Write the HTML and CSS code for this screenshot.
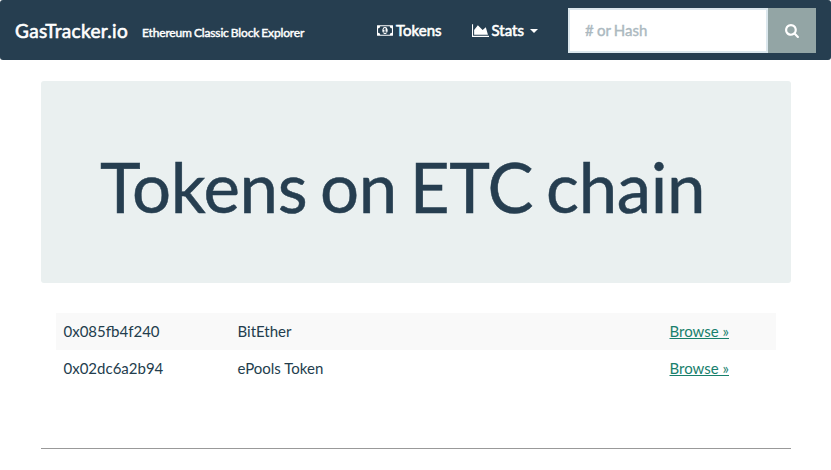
FILE: index.html
```html
<!DOCTYPE html>
<html lang="en">
<head>
<meta charset="utf-8">
<title>Tokens on ETC chain</title>
<link rel="stylesheet" href="styles.css">
</head>
<body>
<nav class="navbar">
  <a class="brand">GasTracker.io</a>
  <span class="tagline">Ethereum Classic Block Explorer</span>
  <div class="links">
    <a class="link"><svg class="icon-money" viewBox="0 0 1920 1792"><path fill="currentColor" d="M768 1152h384v-96h-128V608H910L762 745l77 80q42-37 55-57h2v288H768zm512-256q0 70-21 142t-59.500 134-101.500 101-138 39-138-39-101.500-101T661 1038t-21-142 21-142 59.500-134T822 519t138-39 138 39 101.500 101 59.500 134 21 142zm512 256V640q-106 0-181-75t-75-181H384q0 106-75 181t-181 75v512q106 0 181 75t75 181h1152q0-106 75-181t181-75zm128-832v1152q0 26-19 45t-45 19H64q-26 0-45-19t-19-45V320q0-26 19-45t45-19h1792q26 0 45 19t19 45z"/></svg><span>Tokens</span></a>
    <a class="link stats"><svg class="icon-chart" viewBox="0 0 2048 1792"><path fill="currentColor" d="M2048 1536v128H0V128h128v1408zM1664 512l256 896H256V832l448-576 576 576z"/></svg><span>Stats</span><i class="caret"></i></a>
  </div>
  <form class="search">
    <input class="field" type="text" placeholder="# or Hash">
    <button class="go" type="button" aria-label="Search"><svg class="icon-search" viewBox="0 0 1664 1792"><path fill="currentColor" d="M1152 832q0-185-131.500-316.500T704 384 387.500 515.500 256 832t131.500 316.500T704 1280t316.500-131.500T1152 832zm512 832q0 52-38 90t-90 38q-54 0-90-38l-343-342q-179 124-399 124-143 0-273.500-55.500t-225-150-150-225T0 832t55.500-273.500 150-225 225-150T704 128t273.500 55.500 225 150 150 225T1408 832q0 220-124 399l343 343q37 37 37 90z"/></svg></button>
  </form>
</nav>
<main class="container">
  <header class="hero"><h1>Tokens on ETC chain</h1></header>
  <table class="tokens">
    <tr><td class="addr">0x085fb4f240</td><td class="name">BitEther</td><td><a href="#">Browse »</a></td></tr>
    <tr><td class="addr">0x02dc6a2b94</td><td class="name">ePools Token</td><td><a href="#">Browse »</a></td></tr>
  </table>
  <hr class="rule">
</main>
</body>
</html>
```
FILE: styles.css
```css
* { box-sizing: border-box; }
body { margin: 0; background: #fff; color: #233d4d; font: 15px/21px Lato, sans-serif; height: 470px; overflow: hidden; }
.navbar { height: 60px; background: #263e50; border-radius: 3px; color: #fff; display: flex; align-items: center; padding: 0 15px; }
.brand { font-size: 19px; -webkit-text-stroke: .6px #fff; letter-spacing: .32px; width: 127px; white-space: nowrap; }
.tagline { font-size: 12px; -webkit-text-stroke: .45px #fff; letter-spacing: -.15px; word-spacing: -.8px; width: 235px; white-space: nowrap; padding-top: 5px; flex: none; }
.links { display: flex; gap: 30px; width: 191px; }
.link { display: flex; align-items: center; -webkit-text-stroke: .6px #fff; gap: 3px; }
.icon-money { width: 16px; height: 15px; }
.icon-chart { width: 17px; height: 15px; }
.icon-search { width: 14px; height: 15px; }
.caret { border: 4px solid transparent; border-top-color: #fff; border-bottom: 0; margin: 2px 0 0 3px; }
.search { display: flex; height: 45px; width: 248px; }
.field { width: 200px; border: 2px solid #dbe7ed; padding: 0 15px; font: 15px Lato, sans-serif; outline: 0; }
.field::placeholder { color: #acb9bf; -webkit-text-stroke: .4px #acb9bf; word-spacing: -.6px; opacity: 1; }
.go { width: 48px; border: 0; padding: 0; background: #93a5a5; color: #fff; display: grid; place-items: center; }
.container { width: 750px; margin: 21px 0 0 41px; }
.hero { height: 202px; background: #eaf0f0; border-radius: 3px; padding: 66px 59px; }
h1 { margin: 0; font-size: 69px; line-height: 80px; font-weight: 400; letter-spacing: -.35px; word-spacing: -4.5px; color: #263e50; -webkit-text-stroke: .5px #263e50; white-space: nowrap; }
.tokens { width: 720px; margin: 30px 15px 0; border-collapse: collapse; table-layout: fixed; }
.tokens td { height: 37px; padding: 0 7.5px; }
.tokens tr:first-child { background: #f9f9f9; }
.addr { width: 174px; }
.name { width: 432px; }
.tokens a { color: #18806c; text-decoration: underline; }
.rule { border: 0; height: 1px; background: #999; margin: 61px 0 0; }
```
